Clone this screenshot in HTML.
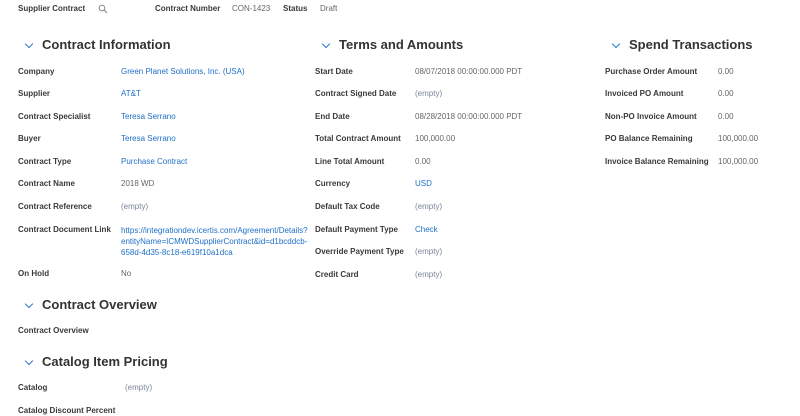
<!DOCTYPE html>
<html><head><style>
body{margin:0;width:800px;height:415px;background:#fff;position:relative;overflow:hidden;font-family:"Liberation Sans",sans-serif;}
#w{position:absolute;left:0;top:1px;width:800px;height:415px;}
div div{position:absolute;white-space:nowrap;font-size:8px;line-height:10px;}
.l{color:#3a3a3a;font-weight:bold;}
.v{color:#666;}
.a{color:#1f6fc9;}
.e{color:#7a8599;}
div .h{font-size:13px;line-height:18px;font-weight:bold;color:#333;}
.c{width:5px;height:5px;border-right:1.3px solid #2f7bd0;border-bottom:1.3px solid #2f7bd0;transform:rotate(45deg);}
</style></head><body><div id="w">
<div class="l" style="left:18px;top:3px">Supplier Contract</div>
<svg style="position:absolute;left:98px;top:3px" width="10" height="10" viewBox="0 0 10 10"><circle cx="4" cy="4" r="2.8" fill="none" stroke="#888" stroke-width="1"/><path d="M6 6L9 9" stroke="#888" stroke-width="1.2"/></svg>
<div class="l" style="left:155px;top:3px">Contract Number</div>
<div class="v" style="left:232px;top:3px">CON-1423</div>
<div class="l" style="left:283px;top:3px">Status</div>
<div class="v" style="left:320px;top:3px">Draft</div>

<div class="c" style="left:26px;top:40px"></div><div class="h" style="left:42px;top:35px">Contract Information</div>
<div class="c" style="left:323px;top:40px"></div><div class="h" style="left:339px;top:35px">Terms and Amounts</div>
<div class="c" style="left:613px;top:40px"></div><div class="h" style="left:629px;top:35px">Spend Transactions</div>

<div class="l" style="left:18px;top:66px">Company</div><div class="a" style="left:121px;top:66px">Green Planet Solutions, Inc. (USA)</div>
<div class="l" style="left:18px;top:88px">Supplier</div><div class="a" style="left:121px;top:88px">AT&amp;T</div>
<div class="l" style="left:18px;top:111px">Contract Specialist</div><div class="a" style="left:121px;top:111px">Teresa Serrano</div>
<div class="l" style="left:18px;top:133px">Buyer</div><div class="a" style="left:121px;top:133px">Teresa Serrano</div>
<div class="l" style="left:18px;top:156px">Contract Type</div><div class="a" style="left:121px;top:156px">Purchase Contract</div>
<div class="l" style="left:18px;top:178px">Contract Name</div><div class="v" style="left:121px;top:178px">2018 WD</div>
<div class="l" style="left:18px;top:201px">Contract Reference</div><div class="e" style="left:121px;top:201px">(empty)</div>
<div class="l" style="left:18px;top:224px">Contract Document Link</div>
<div class="a" style="left:121px;top:224px;line-height:11px">https://integrationdev.icertis.com/Agreement/Details?<br>entityName=ICMWDSupplierContract&amp;id=d1bcddcb-<br>658d-4d35-8c18-e619f10a1dca</div>
<div class="l" style="left:18px;top:268px">On Hold</div><div class="v" style="left:121px;top:268px">No</div>

<div class="l" style="left:315px;top:66px">Start Date</div><div class="v" style="left:415px;top:66px">08/07/2018 00:00:00.000 PDT</div>
<div class="l" style="left:315px;top:88px">Contract Signed Date</div><div class="e" style="left:415px;top:88px">(empty)</div>
<div class="l" style="left:315px;top:111px">End Date</div><div class="v" style="left:415px;top:111px">08/28/2018 00:00:00.000 PDT</div>
<div class="l" style="left:315px;top:133px">Total Contract Amount</div><div class="v" style="left:415px;top:133px">100,000.00</div>
<div class="l" style="left:315px;top:156px">Line Total Amount</div><div class="v" style="left:415px;top:156px">0.00</div>
<div class="l" style="left:315px;top:178px">Currency</div><div class="a" style="left:415px;top:178px">USD</div>
<div class="l" style="left:315px;top:201px">Default Tax Code</div><div class="e" style="left:415px;top:201px">(empty)</div>
<div class="l" style="left:315px;top:224px">Default Payment Type</div><div class="a" style="left:415px;top:224px">Check</div>
<div class="l" style="left:315px;top:246px">Override Payment Type</div><div class="e" style="left:415px;top:246px">(empty)</div>
<div class="l" style="left:315px;top:269px">Credit Card</div><div class="e" style="left:415px;top:269px">(empty)</div>

<div class="l" style="left:605px;top:66px">Purchase Order Amount</div><div class="v" style="left:718px;top:66px">0.00</div>
<div class="l" style="left:605px;top:88px">Invoiced PO Amount</div><div class="v" style="left:718px;top:88px">0.00</div>
<div class="l" style="left:605px;top:111px">Non-PO Invoice Amount</div><div class="v" style="left:718px;top:111px">0.00</div>
<div class="l" style="left:605px;top:133px">PO Balance Remaining</div><div class="v" style="left:718px;top:133px">100,000.00</div>
<div class="l" style="left:605px;top:156px">Invoice Balance Remaining</div><div class="v" style="left:718px;top:156px">100,000.00</div>

<div class="c" style="left:26px;top:300px"></div><div class="h" style="left:42px;top:295px">Contract Overview</div>
<div class="l" style="left:18px;top:325px">Contract Overview</div>
<div class="c" style="left:26px;top:357px"></div><div class="h" style="left:42px;top:352px">Catalog Item Pricing</div>
<div class="l" style="left:18px;top:382px">Catalog</div><div class="e" style="left:125px;top:382px">(empty)</div>
<div class="l" style="left:18px;top:405px">Catalog Discount Percent</div>
</div></body></html>
